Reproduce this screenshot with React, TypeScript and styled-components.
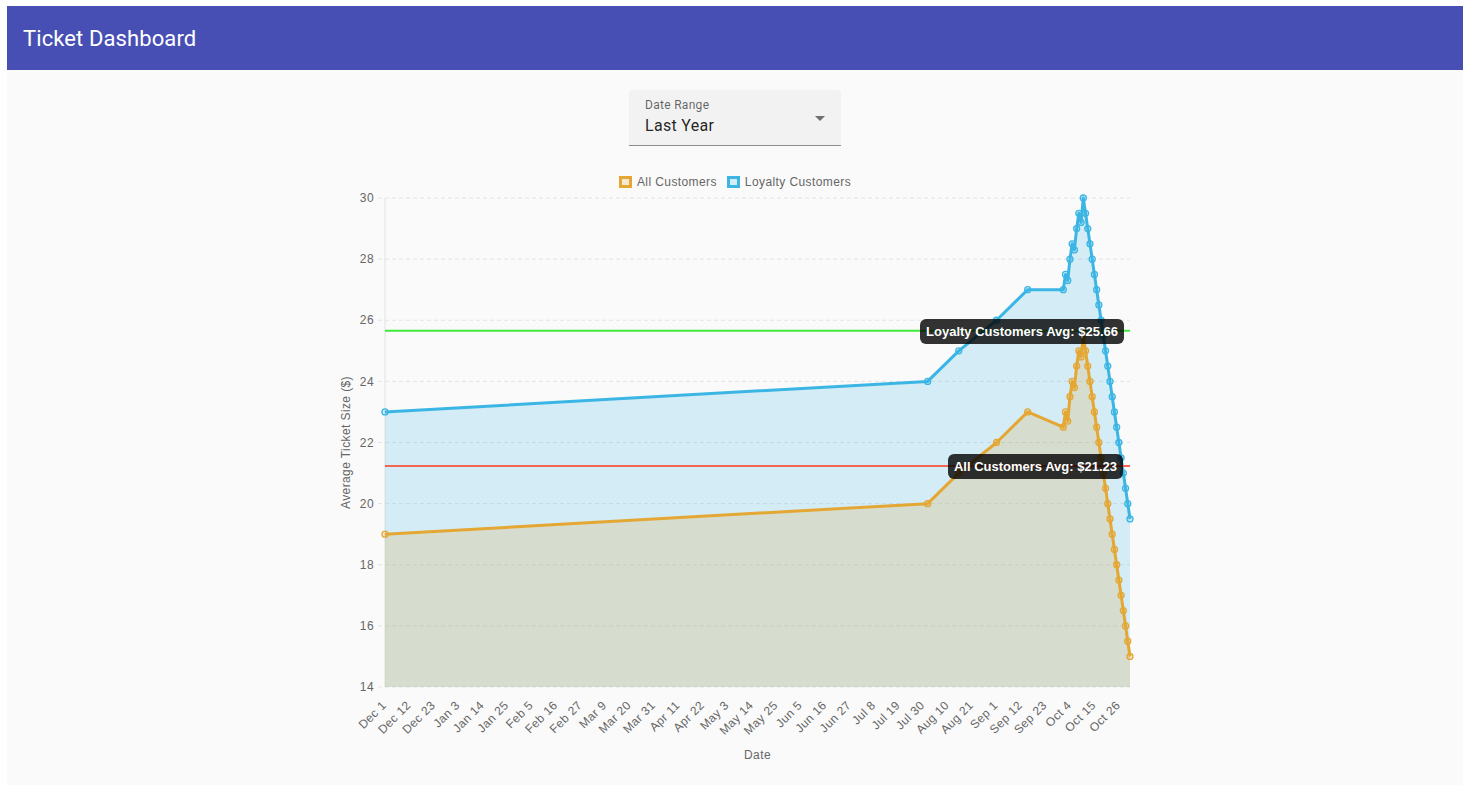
import React from "react";
import styled, { createGlobalStyle } from "styled-components";

const GlobalStyle = createGlobalStyle`
  html, body { margin: 0; padding: 0; background: #ffffff; }
  body { font-family: Roboto, "Liberation Sans", Arial, sans-serif; }
`;

const Page = styled.div`
  margin: 6px 6px 0 7px;
  height: 779px;
  background: #fafafa;
  display: flex;
  flex-direction: column;
`;

const AppBar = styled.header`
  height: 64px;
  flex: none;
  background: #474fb4;
  display: flex;
  align-items: center;
  padding: 0 16px;
`;

const Title = styled.h1`
  margin: 0;
  font-family: Roboto, "Liberation Sans", sans-serif;
  font-size: 22px;
  font-weight: 400;
  letter-spacing: 0.1px;
  color: #ffffff;
`;

const Main = styled.main`
  display: flex;
  flex-direction: column;
  align-items: center;
  padding-top: 20px;
`;

const SelectBox = styled.div`
  position: relative;
  box-sizing: border-box;
  width: 212px;
  height: 56px;
  padding: 0 16px;
  background: #f2f2f2;
  border-radius: 4px 4px 0 0;
  border-bottom: 1px solid #8c8c8c;
  display: flex;
  flex-direction: column;
  font-family: Roboto, "Liberation Sans", sans-serif;
`;

const SelectLabel = styled.span`
  margin-top: 7px;
  font-size: 12px;
  line-height: 16px;
  letter-spacing: 0.3px;
  color: rgba(0, 0, 0, 0.6);
`;

const SelectValue = styled.span`
  margin-top: 1px;
  font-size: 16px;
  line-height: 23px;
  letter-spacing: 0.3px;
  color: rgba(0, 0, 0, 0.87);
`;

const ArrowIcon = styled.svg`
  position: absolute;
  right: 9px;
  top: 16px;
  width: 24px;
  height: 24px;
  fill: rgba(0, 0, 0, 0.54);
`;

const ChartBlock = styled.section`
  width: 800px;
  margin-top: 28px;
  display: flex;
  flex-direction: column;
`;

const Legend = styled.div`
  height: 16px;
  display: flex;
  justify-content: center;
  align-items: center;
  gap: 10px;
  font-family: "Liberation Sans", Arial, sans-serif;
  font-size: 12px;
  letter-spacing: 0.4px;
  color: #666666;
`;

const LegendItem = styled.div`
  display: flex;
  align-items: center;
  gap: 5px;
`;

const LegendBox = styled.span<{ $stroke: string; $fill: string }>`
  box-sizing: border-box;
  width: 13px;
  height: 12px;
  border: 3px solid ${(p) => p.$stroke};
  background: ${(p) => p.$fill};
`;

const Canvas = styled.div`
  position: relative;
  width: 800px;
  height: 580px;
`;

const ChartSvg = styled.svg`
  display: block;
  overflow: visible;
  font-family: "Liberation Sans", Arial, sans-serif;
  letter-spacing: 0.4px;
`;

const AnnotationLabel = styled.div<{ $top: number; $right: number }>`
  position: absolute;
  top: ${(p) => p.$top}px;
  right: ${(p) => p.$right}px;
  padding: 5px 6px;
  border-radius: 6px;
  background: rgba(0, 0, 0, 0.8);
  color: #ffffff;
  font-family: "Liberation Sans", Arial, sans-serif;
  font-size: 13px;
  font-weight: 700;
  line-height: 15px;
  white-space: nowrap;
`;

const W = 800;
const H = 580;
const L = 50;
const R = 795;
const T = 8;
const B = 497;
const DAYS = 335;

const xOf = (d: number) => L + (d * (R - L)) / DAYS;
const yOf = (v: number) => B - ((v - 14) * (B - T)) / 16;

const BLUE = "#3bb6e4";
const BLUE_FILL = "rgba(56, 182, 230, 0.2)";
const ORANGE = "#e5a733";
const ORANGE_FILL = "rgba(230, 167, 50, 0.2)";

function buildSeries(base: [number, number][], oct: number[], peak: number): [number, number][] {
  const pts: [number, number][] = [...base];
  oct.forEach((v, i) => pts.push([305 + i, v]));
  for (let d = 315; d <= 335; d++) pts.push([d, peak - 0.5 * (d - 314)]);
  return pts;
}

const loyalty = buildSeries(
  [[0, 23], [244, 24], [258, 25], [275, 26], [289, 27]],
  [27, 27.5, 27.3, 28, 28.5, 28.3, 29, 29.5, 29.2, 30],
  30
);
const allCustomers = buildSeries(
  [[0, 19], [244, 20], [258, 21], [275, 22], [289, 23]],
  [22.5, 23, 22.7, 23.5, 24, 23.8, 24.5, 25, 24.8, 25.5],
  25.5
);

const MONTHS = ["Jan", "Feb", "Mar", "Apr", "May", "Jun", "Jul", "Aug", "Sep", "Oct", "Nov", "Dec"];
const ticks = Array.from({ length: 31 }, (_, k) => {
  const dt = new Date(2023, 11, 1 + k * 11);
  return { d: k * 11, label: `${MONTHS[dt.getMonth()]} ${dt.getDate()}` };
});

const yTicks = [14, 16, 18, 20, 22, 24, 26, 28, 30];

function linePath(pts: [number, number][]) {
  return pts.map(([d, v], i) => `${i ? "L" : "M"}${xOf(d).toFixed(2)},${yOf(v).toFixed(2)}`).join(" ");
}
function areaPath(pts: [number, number][]) {
  const last = pts[pts.length - 1];
  return `${linePath(pts)} L${xOf(last[0]).toFixed(2)},${B} L${xOf(pts[0][0]).toFixed(2)},${B} Z`;
}

function Series({ pts, stroke, fill }: { pts: [number, number][]; stroke: string; fill: string }) {
  return (
    <g>
      <path d={areaPath(pts)} fill={fill} stroke="none" />
      <path d={linePath(pts)} fill="none" stroke={stroke} strokeWidth={3} strokeLinejoin="round" />
      {pts.map(([d, v]) => (
        <circle key={d} cx={xOf(d)} cy={yOf(v)} r={3} fill={fill} stroke={stroke} strokeWidth={1.3} />
      ))}
    </g>
  );
}

export default function App() {
  return (
    <>
      <GlobalStyle />
      <Page>
        <AppBar>
          <Title>Ticket Dashboard</Title>
        </AppBar>
        <Main>
          <SelectBox>
            <SelectLabel>Date Range</SelectLabel>
            <SelectValue>Last Year</SelectValue>
            <ArrowIcon viewBox="0 0 24 24">
              <path d="M7 10l5 5 5-5z" />
            </ArrowIcon>
          </SelectBox>
          <ChartBlock>
            <Legend>
              <LegendItem>
                <LegendBox $stroke={ORANGE} $fill="rgba(230, 167, 50, 0.2)" />
                All Customers
              </LegendItem>
              <LegendItem>
                <LegendBox $stroke={BLUE} $fill="rgba(56, 182, 230, 0.2)" />
                Loyalty Customers
              </LegendItem>
            </Legend>
            <Canvas>
              <ChartSvg width={W} height={H} viewBox={`0 0 ${W} ${H}`}>
                {yTicks.map((v) => (
                  <g key={v}>
                    <line x1={43} x2={R} y1={yOf(v)} y2={yOf(v)} stroke="#e3e3e3" strokeWidth={1} strokeDasharray="4 3" />
                    <text x={39} y={yOf(v)} dy="0.35em" textAnchor="end" fontSize={12} fill="#666666">
                      {v}
                    </text>
                  </g>
                ))}
                <line x1={L} x2={L} y1={T} y2={B} stroke="#e3e3e3" strokeWidth={1} />
                <text
                  transform={`translate(15, ${(T + B) / 2}) rotate(-90)`}
                  textAnchor="middle"
                  fontSize={12}
                  fill="#666666"
                >
                  Average Ticket Size ($)
                </text>
                <Series pts={loyalty} stroke={BLUE} fill={BLUE_FILL} />
                <Series pts={allCustomers} stroke={ORANGE} fill={ORANGE_FILL} />
                <line x1={L} x2={R} y1={yOf(25.66)} y2={yOf(25.66)} stroke="#3deb3d" strokeWidth={2} />
                <line x1={L} x2={R} y1={yOf(21.23)} y2={yOf(21.23)} stroke="#f26552" strokeWidth={2} />
                {ticks.map((t) => (
                  <text
                    key={t.d}
                    transform={`translate(${(xOf(t.d) + 2).toFixed(2)}, 516) rotate(-45)`}
                    textAnchor="end"
                    fontSize={12}
                    fill="#666666"
                  >
                    {t.label}
                  </text>
                ))}
                <text x={(L + R) / 2} y={569} textAnchor="middle" fontSize={12} fill="#666666">
                  Date
                </text>
              </ChartSvg>
              <AnnotationLabel $top={129} $right={11}>Loyalty Customers Avg: $25.66</AnnotationLabel>
              <AnnotationLabel $top={264} $right={12}>All Customers Avg: $21.23</AnnotationLabel>
            </Canvas>
          </ChartBlock>
        </Main>
      </Page>
    </>
  );
}
